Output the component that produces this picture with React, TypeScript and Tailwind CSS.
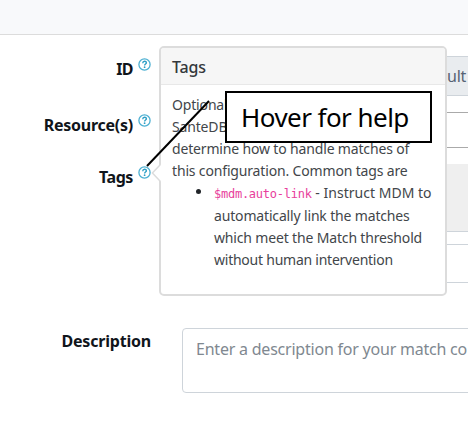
import React from "react";

function HelpIcon() {
  return (
    <svg className="mt-[1.5px] h-[13px] w-[13px] shrink-0" viewBox="0 0 13 13" fill="none">
      <circle cx="6.5" cy="6.5" r="5.6" stroke="#4db0d2" strokeWidth="1.3" />
      <path d="M4.7 5.2C4.8 3.9 5.5 3.3 6.6 3.3c1.1 0 1.8.6 1.8 1.5 0 1.2-1.8 1.3-1.8 2.6" stroke="#2d9fc6" strokeWidth="1.4" />
      <circle cx="6.6" cy="9.2" r=".9" fill="#2d9fc6" />
    </svg>
  );
}

function Label({ children, help, className }: { children: React.ReactNode; help?: boolean; className: string }) {
  return (
    <div className="flex w-[151px] shrink-0 justify-end gap-[5px]">
      <span className={`mt-[1px] whitespace-nowrap text-[16px] leading-6 font-bold text-[#10151b] ${className}`}>{children}</span>
      {help && <HelpIcon />}
    </div>
  );
}

function Popover() {
  return (
    <div className="absolute top-[46px] left-[159px] h-[250px] w-[288px] rounded-[5px] border-2 border-[#dcdcdc] bg-white text-[14px] text-[#42464a]">
      <div className="h-[37px] rounded-t-[3px] border-b border-[#e8e8e8] bg-[#f6f6f6] pl-[11px] text-[16px] leading-[38px] font-medium tracking-[-0.2px] text-[#34383c]">
        Tags
      </div>
      <div className="pt-[9px] pl-[11px] leading-[22px] tracking-[-0.16px] whitespace-nowrap">
        <div>Optional</div>
        <div>SanteDB</div>
        <div>determine how to handle matches of</div>
        <div>this configuration. Common tags are</div>
        <ul className="pl-[42px]">
          <li className="relative">
            <span className="absolute top-[7px] -left-[18px] h-[5px] w-[5px] rounded-full bg-[#212529]" />
            <div className="tracking-[0.02px]">
              <code className="font-['DejaVu_Sans_Mono',monospace] text-[12px] tracking-[-0.25px] text-[#e83e9c]">$mdm.auto-link</code> - Instruct MDM to
            </div>
            <div>automatically link the matches</div>
            <div>which meet the Match threshold</div>
            <div className="tracking-[-0.24px]">without human intervention</div>
          </li>
        </ul>
      </div>
      <svg className="absolute top-[115px] -left-[10px] h-[20px] w-[10px]" viewBox="0 0 10 20">
        <path d="M10 1L2 10L10 19Z" fill="white" />
        <path d="M9 0V2L1.4 10L9 18V20" fill="none" stroke="#dcdcdc" strokeWidth="1.5" />
      </svg>
    </div>
  );
}

export default function App() {
  return (
    <div className="relative h-[428px] w-[468px] overflow-hidden bg-white font-['Noto_Sans',sans-serif]">
      <header className="h-[35px] border-b border-[#dcdcdc] bg-[#f8f9fb]" />
      <main className="flex flex-col pt-[21px]">
        <div className="flex h-[56px] gap-[31px]">
          <Label help className="tracking-[-0.6px]">ID</Label>
          <div className="flex h-[40px] flex-1 items-center justify-end overflow-hidden border border-r-0 border-[#ced4da] bg-[#e9ecef] pr-[2px] text-[16px] tracking-[-0.3px] text-[#566273]">
            default
          </div>
        </div>
        <div className="flex h-[52px] gap-[31px]">
          <Label help className="tracking-[-0.25px]">Resource(s)</Label>
          <div className="h-[36px] flex-1 border-y border-[#aaa]" />
        </div>
        <div className="flex h-[164px] gap-[31px]">
          <Label help className="tracking-[-0.4px]">Tags</Label>
          <div className="flex flex-1 flex-col gap-[12px]">
            <div className="h-[68px] border-b border-[#ced4da] bg-[#efefef]" />
            <div className="h-[39px] border-y border-[#ced4da]" />
          </div>
        </div>
        <div className="flex gap-[31px]">
          <Label className="tracking-[-0.2px]">Description</Label>
          <div className="h-[65px] w-[320px] shrink-0 rounded-l-[4px] border border-[#ced4da] pt-[8px] pl-[13px] text-[16px] leading-6 tracking-[-0.22px] whitespace-nowrap text-[#808890]">
            Enter a description for your match co
          </div>
        </div>
      </main>
      <Popover />
      <svg className="absolute top-[98px] left-[144px] h-[72px] w-[70px]" viewBox="0 0 70 72">
        <path d="M3 68L65 3" stroke="black" strokeWidth="2" />
      </svg>
      <div className="absolute top-[91px] left-[225px] h-[52px] w-[207px] border-2 border-black bg-white pl-[14px] text-[26px] leading-[48px] tracking-[-0.55px] whitespace-nowrap text-black">
        Hover for help
      </div>
    </div>
  );
}
